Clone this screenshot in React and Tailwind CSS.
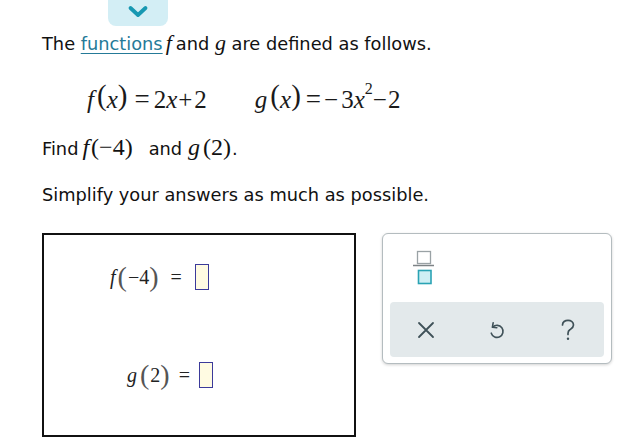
import React from "react";

const serif = { fontFamily: '"Liberation Serif", "Times New Roman", serif' };

function Chevron() {
  return (
    <svg width="22" height="13" viewBox="0 0 22 13">
      <polyline points="3.5,3 11,10 18.5,3" fill="none" stroke="#1798b2" strokeWidth="3.8" strokeLinecap="round" strokeLinejoin="round" />
    </svg>
  );
}

function FractionIcon() {
  return (
    <svg width="22" height="37" viewBox="0 0 22 37">
      <rect x="4.5" y="2.5" width="13" height="12" fill="#fff" stroke="#9aa2a5" strokeWidth="1.3" />
      <line x1="0" y1="16.5" x2="21" y2="16.5" stroke="#7d8386" strokeWidth="1.5" />
      <rect x="5.5" y="21.5" width="12.5" height="13" fill="#cfeff4" stroke="#2aa3b4" strokeWidth="1.6" />
    </svg>
  );
}

function XIcon() {
  return (
    <svg width="18" height="18" viewBox="0 0 18 18">
      <path d="M2 2 L16 16 M16 2 L2 16" stroke="#3f5158" strokeWidth="1.8" strokeLinecap="round" />
    </svg>
  );
}

function UndoIcon() {
  return (
    <svg width="19" height="20" viewBox="0 0 24 24">
      <path d="M7.2 8.4 A7.6 7.6 0 1 1 5.4 16" fill="none" stroke="#3f5158" strokeWidth="2" strokeLinecap="round" />
      <polyline points="7.8,2.8 6.8,8.6 12.4,9.2" fill="none" stroke="#3f5158" strokeWidth="2" strokeLinecap="round" strokeLinejoin="round" />
    </svg>
  );
}

function QIcon() {
  return (
    <svg width="16" height="22" viewBox="0 0 16 22">
      <path d="M2.5 6 C2.5 3 5 1.3 8 1.3 C11 1.3 13.5 3.2 13.5 6 C13.5 8.6 11.5 9.6 9.8 10.8 C8.5 11.7 8 12.6 8 14.5 L8 15.5" fill="none" stroke="#3f5158" strokeWidth="1.7" strokeLinecap="round" />
      <circle cx="8" cy="19.8" r="1.2" fill="#3f5158" />
    </svg>
  );
}

export default function App() {
  return (
    <div
      className="w-[618px] h-[440px] bg-white overflow-hidden text-[#111]"
      style={{ fontFamily: '"DejaVu Sans", Verdana, sans-serif' }}
    >
      <div className="ml-[108px] w-[60px] h-[26px] bg-[#d3eef5] rounded-b-[8px] flex items-center justify-center pb-[3px]">
        <Chevron />
      </div>

      <div className="pl-[42px]">
        <p className="mt-[5px] text-[17.8px] leading-[24px]">
          The{" "}
          <span className="text-[#257a98] underline underline-offset-[3px] decoration-[1px]">functions</span>
          <span className="italic text-[22px] ml-[3px] mr-[4px]" style={serif}>f</span>
          and{" "}
          <span className="italic text-[22px]" style={serif}>g</span> are defined as follows.
        </p>

        <div className="mt-[27px] h-[30px] flex items-baseline text-[25px] leading-[30px] text-[#1a1a1a]" style={serif}>
          <div className="ml-[45px] flex items-baseline">
            <span className="italic">f</span>
            <span className="text-[29px] -translate-y-[3px] ml-[3px]">(</span>
            <span className="italic">x</span>
            <span className="text-[29px] -translate-y-[3px]">)</span>
            <span className="ml-[7px] text-[27px]">=</span>
            <span className="ml-[4px]">2</span>
            <span className="italic">x</span>
            <span className="ml-[1px]">+</span>
            <span className="ml-[2px]">2</span>
          </div>
          <div className="ml-[48px] flex items-baseline">
            <span className="italic">g</span>
            <span className="text-[29px] -translate-y-[3px] ml-[3px]">(</span>
            <span className="italic">x</span>
            <span className="text-[29px] -translate-y-[3px]">)</span>
            <span className="ml-[5px] text-[27px]">=</span>
            <span className="ml-[3px]">−</span>
            <span className="ml-[3px]">3</span>
            <span className="italic">x</span>
            <span className="text-[16px] -translate-y-[14px]">2</span>
            <span>−</span>
            <span className="ml-[1px]">2</span>
          </div>
        </div>

        <div className="mt-[20px] h-[30px] flex items-baseline text-[17.8px] leading-[28px]">
          <span>Find</span>
          <span className="ml-[4px] text-[24px] flex items-baseline" style={serif}>
            <span className="italic">f</span>
            <span className="ml-[2px]">(</span>
            <span>−4</span>
            <span>)</span>
          </span>
          <span className="ml-[16px]">and</span>
          <span className="ml-[6px] text-[24px] flex items-baseline" style={serif}>
            <span className="italic">g</span>
            <span className="ml-[3px]">(</span>
            <span>2</span>
            <span>)</span>
          </span>
          <span className="ml-[1px]">.</span>
        </div>

        <p className="mt-[20px] text-[17.8px] leading-[24px]">
          Simplify your answers as much as possible.
        </p>

        <div className="mt-[26px] flex items-start gap-[26px]">
          <div className="w-[314px] h-[204px] border-2 border-[#111] flex flex-col">
            <div className="mt-[29px] h-[26px] flex items-center text-[20px] text-[#222]" style={serif}>
              <span className="ml-[66px] italic">f</span>
              <span className="ml-[2px] text-[28px] text-[#555] leading-none">(</span>
              <span className="ml-[1px]">−4</span>
              <span className="text-[28px] text-[#555] leading-none">)</span>
              <span className="ml-[12px]">=</span>
              <span className="ml-[13px] w-[14px] h-[26px] border-[1.5px] border-[#3b3a9a] bg-[#fffbe2]" />
            </div>
            <div className="mt-[72px] h-[26px] flex items-center text-[20px] text-[#222]" style={serif}>
              <span className="ml-[83px] italic">g</span>
              <span className="ml-[3px] text-[28px] text-[#555] leading-none">(</span>
              <span className="ml-[1px]">2</span>
              <span className="text-[28px] text-[#555] leading-none">)</span>
              <span className="ml-[9px]">=</span>
              <span className="ml-[9px] w-[14px] h-[26px] border-[1.5px] border-[#3b3a9a] bg-[#fffbe2]" />
            </div>
          </div>

          <div className="w-[230px] h-[131px] border border-[#b4bcbf] rounded-[6px] shadow-[0_1px_3px_rgba(0,0,0,0.18)] flex flex-col bg-white">
            <div className="h-[68px] pl-[30px] pt-[15px]">
              <FractionIcon />
            </div>
            <div className="mx-[7px] h-[55px] rounded-[4px] bg-[#e3e9eb] grid grid-cols-3 items-center justify-items-center">
              <XIcon />
              <UndoIcon />
              <QIcon />
            </div>
          </div>
        </div>
      </div>
    </div>
  );
}
